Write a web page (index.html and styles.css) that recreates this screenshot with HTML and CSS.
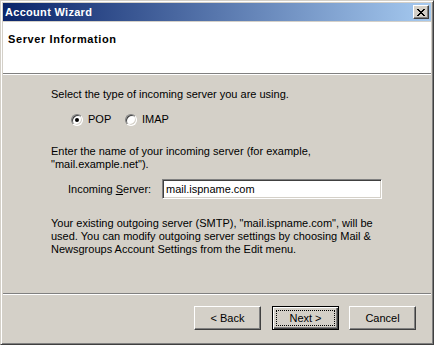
FILE: index.html
```html
<!DOCTYPE html>
<html>
<head>
<meta charset="utf-8">
<title>Account Wizard</title>
<link rel="stylesheet" href="styles.css">
</head>
<body>
<div class="window">
  <div class="titlebar">
    <span class="title">Account Wizard</span>
    <button class="close" type="button" aria-label="Close">
      <svg width="8" height="7" viewBox="0 0 8 7" shape-rendering="crispEdges"><path d="M0 0h2v1H0z M6 0h2v1H6z M1 1h2v1H1z M5 1h2v1H5z M2 2h4v1H2z M3 3h2v1H3z M2 4h4v1H2z M1 5h2v1H1z M5 5h2v1H5z M0 6h2v1H0z M6 6h2v1H6z" fill="#000"/></svg>
    </button>
  </div>
  <div class="client">
    <div class="header"><h1 class="heading">Server Information</h1></div>
    <div class="content">
      <p class="intro">Select the type of incoming server you are using.</p>
      <div class="radios">
        <label class="radio"><span class="rb rb-checked"></span>POP</label>
        <label class="radio"><span class="rb"></span>IMAP</label>
      </div>
      <p class="enter">Enter the name of your incoming server (for example,<br>"mail.example.net").</p>
      <div class="field">
        <span class="field-label">Incoming <u>S</u>erver:</span>
        <div class="textbox">mail.ispname.com</div>
      </div>
      <p class="note">Your existing outgoing server (SMTP), "mail.ispname.com", will be<br>used. You can modify outgoing server settings by choosing Mail &amp;<br>Newsgroups Account Settings from the Edit menu.</p>
    </div>
    <div class="footer">
      <button class="btn btn-back" type="button">&lt; Back</button>
      <button class="btn btn-default" type="button">Next &gt;</button>
      <button class="btn" type="button">Cancel</button>
    </div>
  </div>
</div>
</body>
</html>
```

FILE: styles.css
```css
html, body {
  margin: 0;
  padding: 0;
  background: #d4d0c8;
}

body {
  font-family: "Liberation Sans", Arial, sans-serif;
  font-size: 11px;
  line-height: 13px;
  color: #000;
}

.window {
  box-sizing: border-box;
  width: 434px;
  height: 345px;
  display: flex;
  flex-direction: column;
  background: #d4d0c8;
  border: 1px solid;
  border-color: #d4d0c8 #404040 #404040 #d4d0c8;
  box-shadow: inset 1px 1px #ffffff, inset -1px -1px #808080;
  padding: 2px;
}

.titlebar {
  height: 18px;
  flex: none;
  margin-bottom: 1px;
  display: flex;
  align-items: center;
  justify-content: space-between;
  padding: 0 2px;
  background: linear-gradient(to right, #0a246a, #a6caf0);
}

.title {
  color: #fff;
  font-weight: bold;
  font-size: 11px;
  letter-spacing: 0.3px;
}

.close {
  box-sizing: border-box;
  width: 16px;
  height: 14px;
  padding: 0 1px 0 0;
  margin: 0;
  display: flex;
  align-items: center;
  justify-content: center;
  background: #d4d0c8;
  border: 1px solid;
  border-color: #ffffff #404040 #404040 #ffffff;
  box-shadow: inset -1px -1px #808080;
}

.close svg {
  display: block;
}

.client {
  flex: 1;
  display: flex;
  flex-direction: column;
}

.header {
  height: 52px;
  flex: none;
  background: #fff;
  border-bottom: 1px solid #808080;
  padding: 11px 0 0 5px;
  box-sizing: border-box;
}

.heading {
  margin: 0;
  font-size: 11px;
  line-height: 13px;
  font-weight: bold;
  letter-spacing: 0.6px;
}

.content {
  flex: 1;
  border-top: 1px solid #fff;
  padding: 13px 0 0 48px;
}

.intro, .enter, .note {
  margin: 0;
}

.radios {
  margin: 12px 0 0 20px;
  display: grid;
  grid-template-columns: 54px auto;
  height: 13px;
}

.radio {
  display: flex;
  align-items: center;
  gap: 5px;
}

.rb {
  box-sizing: border-box;
  position: relative;
  width: 12px;
  height: 12px;
  border-radius: 50%;
  background: #fff;
  border: 1px solid;
  border-color: #808080 #ffffff #ffffff #808080;
  box-shadow: inset 1px 1px #404040, inset -1px -1px #d4d0c8;
}

.rb-checked::after {
  content: "";
  position: absolute;
  left: 3px;
  top: 3px;
  width: 4px;
  height: 4px;
  border-radius: 50%;
  background: #000;
}

.enter {
  margin-top: 19px;
}

.field {
  margin: 8px 0 0 17px;
  display: flex;
  align-items: center;
}

.field-label {
  width: 94px;
}

.textbox {
  box-sizing: border-box;
  width: 220px;
  height: 20px;
  padding: 0 3px;
  display: flex;
  align-items: center;
  background: #fff;
  border: 1px solid;
  border-color: #808080 #ffffff #ffffff #808080;
  box-shadow: inset 1px 1px #404040, inset -1px -1px #d4d0c8;
}

.note {
  margin-top: 18px;
}

.footer {
  height: 49px;
  flex: none;
  box-sizing: border-box;
  border-top: 1px solid #808080;
  box-shadow: inset 0 1px #fff;
  padding: 12px 15px 0 0;
  display: flex;
  justify-content: flex-end;
  align-items: flex-start;
  gap: 10px;
}

.btn {
  box-sizing: border-box;
  position: relative;
  width: 67px;
  height: 24px;
  margin: 0;
  padding: 0;
  font-family: "Liberation Sans", Arial, sans-serif;
  font-size: 11px;
  color: #000;
  background: #d4d0c8;
  border: 1px solid;
  border-color: #ffffff #404040 #404040 #ffffff;
  box-shadow: inset -1px -1px #808080;
}

.btn-back {
  margin-right: 1px;
}

.btn-default {
  border-color: #000;
  box-shadow: inset 1px 1px #ffffff, inset -1px -1px #404040, inset -2px -2px #808080;
}

.btn-default::after {
  content: "";
  position: absolute;
  left: 3px;
  top: 3px;
  right: 3px;
  bottom: 3px;
  border: 1px dotted #000;
}
```
